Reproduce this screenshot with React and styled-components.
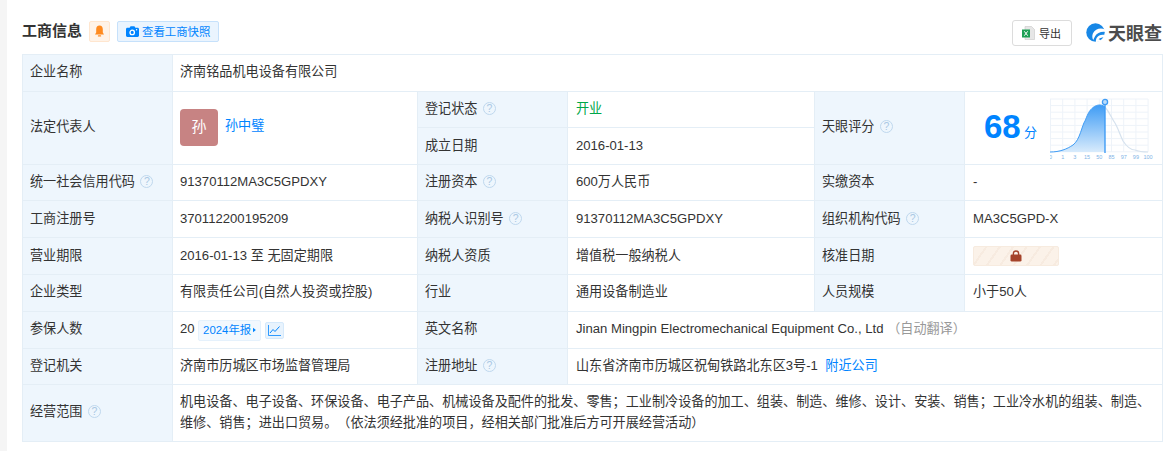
import React from "react";
import styled, { createGlobalStyle } from "styled-components";

const GlobalStyle = createGlobalStyle`
  html, body {
    margin: 0;
    background: #fff;
  }
  body {
    font-family: "Liberation Sans", "Noto Sans CJK SC", sans-serif;
    font-size: 13.12px;
    color: #333;
    text-spacing-trim: space-all;
  }
`;

const Page = styled.div`
  display: flex;
  width: 1175px;
  height: 451px;
  overflow: hidden;
`;

const Strip = styled.div`
  width: 7px;
  background: #f5f5f5;
  flex: none;
`;

const Content = styled.div`
  width: 1140px;
  margin-left: 15px;
`;

const Header = styled.div`
  display: flex;
  align-items: center;
  height: 54px;
`;

const Title = styled.div`
  font-size: 15px;
  font-weight: 700;
  color: #333;
  margin-right: 7px;
  line-height: 22px;
  margin-top: 8px;
`;

const BellBox = styled.div`
  display: flex;
  align-items: center;
  justify-content: center;
  box-sizing: border-box;
  width: 21px;
  height: 21px;
  border: 1px solid #ffe6cf;
  border-radius: 2px;
  background: #fff3e8;
  margin-right: 7px;
  margin-top: 8px;
`;

const SnapButton = styled.div`
  display: flex;
  align-items: center;
  gap: 3px;
  box-sizing: border-box;
  width: 102px;
  height: 21px;
  padding-left: 8px;
  border: 1px solid #c6e1fb;
  border-radius: 2px;
  background: #eaf4fe;
  color: #0084ff;
  font-size: 11.4px;
  margin-top: 8px;
`;

const Spacer = styled.div`
  flex: 1;
`;

const ExportButton = styled.div`
  display: flex;
  align-items: center;
  box-sizing: border-box;
  width: 60px;
  height: 26px;
  gap: 4px;
  padding-left: 9px;
  border: 1px solid #dcdcdc;
  border-radius: 3px;
  font-size: 11px;
  color: #333;
  margin-right: 14px;
  margin-top: 12px;
`;

const Logo = styled.div`
  display: flex;
  align-items: center;
  gap: 3px;
  width: 76px;
  font-size: 18px;
  font-weight: 700;
  color: #4c4c4c;
  margin-top: 10px;
  white-space: nowrap;
`;

const Table = styled.table`
  width: 1140px;
  table-layout: fixed;
  border-collapse: collapse;
  border: 1px solid #e4eef6;
`;

const Row = styled.tr`
  height: ${(p) => p.$h || 37}px;
  ${(p) => p.$low && "td { padding-bottom: 0; }"}
`;

const Label = styled.td`
  box-sizing: border-box;
  padding: 0 8px 2px 7px;
  background: #eef6fd;
  border: 1px solid #e4eef6;
  line-height: 18px;
  white-space: nowrap;
`;

const Value = styled.td`
  box-sizing: border-box;
  padding: 0 8px 2px;
  border: 1px solid #e4eef6;
  line-height: 18px;
  white-space: nowrap;
`;

const FirstValue = styled(Value)`
  padding-left: 7px;
`;

const ScopeValue = styled(FirstValue)`
  white-space: normal;
  line-height: 21px;
`;

const Help = styled.span`
  display: inline-block;
  box-sizing: border-box;
  width: 13px;
  height: 13px;
  margin-left: 5.5px;
  border: 1.2px solid #bfd8ee;
  border-radius: 50%;
  color: #aac8e4;
  font-size: 10.5px;
  line-height: 10.5px;
  text-align: center;
  vertical-align: 1px;
`;

const Link = styled.span`
  color: #0084ff;
`;

const AddressLink = styled(Link)`
  margin-left: 7.5px;
`;

const PersonName = styled(Link)`
  padding-bottom: 2px;
`;

const Status = styled.span`
  color: #00a74a;
`;

const Muted = styled.span`
  color: #999;
`;

const Person = styled.div`
  display: flex;
  align-items: center;
  gap: 7px;
`;

const Avatar = styled.div`
  display: flex;
  align-items: center;
  justify-content: center;
  width: 38px;
  height: 37px;
  border-radius: 4px;
  background: #c78383;
  color: #fff;
  font-size: 15px;
`;

const Score = styled.div`
  display: flex;
  align-items: center;
  height: 70px;
`;

const ScoreNum = styled.span`
  width: 36px;
  margin-left: 11px;
  font-size: 33px;
  font-weight: 700;
  color: #0084ff;
  line-height: 40px;
`;

const ScoreUnit = styled.span`
  margin: 12px 0 0 4px;
  width: 14px;
  color: #0084ff;
  font-size: 13px;
`;

const ChartBox = styled.div`
  margin: 2px 0 0 13px;
  width: 105px;
  height: 66px;
`;

const Locked = styled.div`
  display: flex;
  align-items: center;
  justify-content: center;
  box-sizing: border-box;
  width: 86px;
  height: 20px;
  border: 1px solid #f7ebdf;
  border-radius: 2px;
  background: repeating-linear-gradient(125deg, #fbf2e9 0 9px, #f7ebe0 9px 11px);
`;

const InsureRow = styled.div`
  display: flex;
  align-items: center;
`;

const ReportTag = styled.span`
  display: inline-flex;
  align-items: center;
  gap: 2px;
  box-sizing: border-box;
  width: 63px;
  height: 21px;
  margin: 2px 0 0 3.5px;
  padding: 0 4px;
  border: 1px solid #e5f1fc;
  border-radius: 2px;
  background: #f2f8fe;
  color: #0084ff;
  font-size: 11.4px;
`;

const TrendTag = styled.span`
  display: inline-flex;
  align-items: center;
  justify-content: center;
  box-sizing: border-box;
  width: 19px;
  height: 17px;
  margin: 2px 0 0 4px;
  border: 1px solid #d5e9fb;
  border-radius: 2px;
  background: #e8f3fd;
`;

function Bell() {
  return (
    <svg width="11" height="12" viewBox="0 0 11 12">
      <path d="M5.5 0.5C7.7 0.5 8.8 2.2 8.8 4.3V7.4L10 9.6H1L2.2 7.4V4.3C2.2 2.2 3.3 0.5 5.5 0.5Z" fill="#ff8a1f" />
      <rect x="3.8" y="10.2" width="3.4" height="1.4" rx="0.7" fill="#ff8a1f" />
    </svg>
  );
}

function Camera() {
  return (
    <svg width="13" height="11" viewBox="0 0 13 11">
      <path d="M1.4 1.8H3.6L4.6 0.3H8.4L9.4 1.8H11.6C12.4 1.8 13 2.4 13 3.2V9.6C13 10.4 12.4 11 11.6 11H1.4C.6 11 0 10.4 0 9.6V3.2C0 2.4 .6 1.8 1.4 1.8Z" fill="#0084ff" />
      <circle cx="6.2" cy="6.4" r="2.2" fill="none" stroke="#fff" strokeWidth="1.3" />
      <circle cx="10.6" cy="3.8" r="0.7" fill="#fff" />
    </svg>
  );
}

function ExcelIcon() {
  return (
    <svg width="13" height="14" viewBox="0 0 13 14">
      <path d="M3 0.5H9.5L12.5 3.5V13.5H3Z" fill="#e6e6e6" stroke="#c8c8c8" strokeWidth="0.6" />
      <rect x="0" y="3.5" width="8" height="8" fill="#1d9f55" />
      <path d="M2.3 5.3L5.7 9.7M5.7 5.3L2.3 9.7" stroke="#fff" strokeWidth="1" />
    </svg>
  );
}

function LogoMark() {
  return (
    <svg width="19" height="19" viewBox="0 0 19 19">
      <circle cx="9.5" cy="9.5" r="9.2" fill="#1787e6" />
      <path d="M19 6.4C14.5 4.4 9 6 7 10.2C5.9 12.7 6.2 15 7.2 17C7.9 15.6 8.4 14.4 9.2 13C10.8 10.2 14.5 8.4 19 8.8Z" fill="#fff" />
      <path d="M19 12C15.6 11 12.4 12.2 10.8 14.8C10.2 15.8 9.9 17 9.8 18.9C11 19 13 18.4 14.6 17.4C14 16.6 13.4 16.4 12.6 16.2C14 14.6 16.6 14.4 18.8 14Z" fill="#fff" />
    </svg>
  );
}

function Lock() {
  return (
    <svg width="12" height="12" viewBox="0 0 12 12">
      <path d="M3.4 5V3.4C3.4 1.9 4.5 1 6 1C7.5 1 8.6 1.9 8.6 3.4V5" fill="none" stroke="#a5432a" strokeWidth="1.4" />
      <rect x="0.5" y="4.6" width="11" height="7" rx="1.4" fill="#a5432a" />
    </svg>
  );
}

function Trend() {
  return (
    <svg width="13" height="11" viewBox="0 0 13 11">
      <path d="M.5 0V10.5H13" fill="none" stroke="#0084ff" strokeWidth="0.8" />
      <path d="M2 8L5 4.5L7 6.5L11.5 1.5" fill="none" stroke="#0084ff" strokeWidth="1" />
    </svg>
  );
}

function ScoreChart() {
  const xs = [0, 1, 2, 3, 4, 5, 6, 7, 8].map((i) => i * 12.2);
  const ys = [0, 1, 2, 3, 4, 5, 6, 7, 8].map((i) => 4 + i * 6.6);
  const ticks = ["0", "1", "3", "15", "50", "85", "97", "99", "100"];
  const left = "M0 57C10 57 17 54 23 50C30 45 32 30 35 26C37 21 39 16 41 14.5C44 11 47 10 50 10C52 10 54 11 55 12";
  const right = "M55 12C60 18 62 24 65 28C68 33 70 40 73 46C77 52 82 55 85 55C90 57 94 57 98 57";
  return (
    <svg width="105" height="66" viewBox="0 0 105 66">
      <defs>
        <linearGradient id="bell" x1="0" y1="0" x2="0" y2="1">
          <stop offset="0" stopColor="#3f9cf5" />
          <stop offset="1" stopColor="#d8ebfc" />
        </linearGradient>
      </defs>
      {xs.map((x) => (
        <line key={x} x1={x + 0.5} y1="4" x2={x + 0.5} y2="57" stroke="#eef3f9" />
      ))}
      {ys.map((y) => (
        <line key={y} x1="0" y1={y} x2="98" y2={y} stroke="#eef3f9" />
      ))}
      <path d={right} fill="none" stroke="#d6e2ee" strokeWidth="1.2" />
      <path d={`${left}V57H0Z`} fill="url(#bell)" />
      <path d={left} fill="none" stroke="#3f9cf5" strokeWidth="1" />
      <line x1="55" y1="9" x2="55" y2="58" stroke="#3f9cf5" strokeWidth="1.4" />
      <circle cx="55" cy="7" r="2.6" fill="#bcdcfa" stroke="#3f9cf5" strokeWidth="1.3" />
      {ticks.map((t, i) => (
        <text key={t} x={i * 12.2 + 0.5} y="64" fontSize="5.5" fill="#7fb4e6" textAnchor="middle">{t}</text>
      ))}
    </svg>
  );
}

export default function App() {
  return (
    <Page>
      <GlobalStyle />
      <Strip />
      <Content>
        <Header>
          <Title>工商信息</Title>
          <BellBox><Bell /></BellBox>
          <SnapButton><Camera />查看工商快照</SnapButton>
          <Spacer />
          <ExportButton><ExcelIcon />导出</ExportButton>
          <Logo><LogoMark />天眼查</Logo>
        </Header>
        <Table>
          <colgroup>
            <col style={{ width: 150 }} />
            <col style={{ width: 245 }} />
            <col style={{ width: 150 }} />
            <col style={{ width: 247 }} />
            <col style={{ width: 150 }} />
            <col style={{ width: 198 }} />
          </colgroup>
          <tbody>
            <Row>
              <Label>企业名称</Label>
              <FirstValue colSpan={5}>济南铭品机电设备有限公司</FirstValue>
            </Row>
            <Row $h={36}>
              <Label rowSpan={2}>法定代表人</Label>
              <FirstValue rowSpan={2}>
                <Person><Avatar>孙</Avatar><PersonName>孙中璧</PersonName></Person>
              </FirstValue>
              <Label>登记状态<Help>?</Help></Label>
              <Value><Status>开业</Status></Value>
              <Label rowSpan={2}>天眼评分<Help>?</Help></Label>
              <Value rowSpan={2}>
                <Score>
                  <ScoreNum>68</ScoreNum>
                  <ScoreUnit>分</ScoreUnit>
                  <ChartBox><ScoreChart /></ChartBox>
                </Score>
              </Value>
            </Row>
            <Row $low>
              <Label>成立日期</Label>
              <Value>2016-01-13</Value>
            </Row>
            <Row $h={36}>
              <Label>统一社会信用代码<Help>?</Help></Label>
              <FirstValue>91370112MA3C5GPDXY</FirstValue>
              <Label>注册资本<Help>?</Help></Label>
              <Value>600万人民币</Value>
              <Label>实缴资本</Label>
              <Value>-</Value>
            </Row>
            <Row $low>
              <Label>工商注册号</Label>
              <FirstValue>370112200195209</FirstValue>
              <Label>纳税人识别号<Help>?</Help></Label>
              <Value>91370112MA3C5GPDXY</Value>
              <Label>组织机构代码<Help>?</Help></Label>
              <Value>MA3C5GPD-X</Value>
            </Row>
            <Row $low>
              <Label>营业期限</Label>
              <FirstValue>2016-01-13 至 无固定期限</FirstValue>
              <Label>纳税人资质</Label>
              <Value>增值税一般纳税人</Value>
              <Label>核准日期</Label>
              <Value><Locked><Lock /></Locked></Value>
            </Row>
            <Row>
              <Label>企业类型</Label>
              <FirstValue>有限责任公司(自然人投资或控股)</FirstValue>
              <Label>行业</Label>
              <Value>通用设备制造业</Value>
              <Label>人员规模</Label>
              <Value>小于50人</Value>
            </Row>
            <Row>
              <Label>参保人数</Label>
              <FirstValue>
                <InsureRow>
                  20
                  <ReportTag>2024年报<svg width="4" height="6" viewBox="0 0 4 6"><path d="M0 0L4 3L0 6Z" fill="#0084ff" /></svg></ReportTag>
                  <TrendTag><Trend /></TrendTag>
                </InsureRow>
              </FirstValue>
              <Label>英文名称</Label>
              <Value colSpan={3}>Jinan Mingpin Electromechanical Equipment Co., Ltd <Muted>（自动翻译）</Muted></Value>
            </Row>
            <Row $h={36}>
              <Label>登记机关</Label>
              <FirstValue>济南市历城区市场监督管理局</FirstValue>
              <Label>注册地址<Help>?</Help></Label>
              <Value colSpan={3}>山东省济南市历城区祝甸铁路北东区3号-1<AddressLink>附近公司</AddressLink></Value>
            </Row>
            <Row $h={57}>
              <Label>经营范围<Help>?</Help></Label>
              <ScopeValue colSpan={5}>
                机电设备、电子设备、环保设备、电子产品、机械设备及配件的批发、零售；工业制冷设备的加工、组装、制造、维修、设计、安装、销售；工业冷水机的组装、制造、维修、销售；进出口贸易。（依法须经批准的项目，经相关部门批准后方可开展经营活动）
              </ScopeValue>
            </Row>
          </tbody>
        </Table>
      </Content>
    </Page>
  );
}
